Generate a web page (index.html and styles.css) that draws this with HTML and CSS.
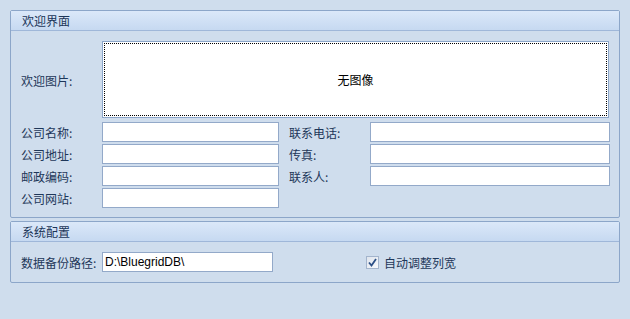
FILE: index.html
```html
<!DOCTYPE html>
<html lang="zh-CN">
<head>
    <meta charset="UTF-8">
    <title>系统设置</title>
    <link rel="stylesheet" href="styles.css">
</head>
<body>
    <div class="page">
        <div class="group">
            <div class="group-title">欢迎界面</div>
            <div class="group-body form-grid">
                <div class="label">欢迎图片:</div>
                <div class="picture">无图像</div>

                <div class="label">公司名称:</div>
                <input class="field" type="text">
                <div class="label label-right">联系电话:</div>
                <input class="field" type="text">

                <div class="label">公司地址:</div>
                <input class="field" type="text">
                <div class="label label-right">传真:</div>
                <input class="field" type="text">

                <div class="label">邮政编码:</div>
                <input class="field" type="text">
                <div class="label label-right">联系人:</div>
                <input class="field" type="text">

                <div class="label">公司网站:</div>
                <input class="field" type="text">
            </div>
        </div>

        <div class="group group-config">
            <div class="group-title">系统配置</div>
            <div class="group-body config-row">
                <div class="label">数据备份路径:</div>
                <input class="field path-field" type="text" value="D:\BluegridDB\">
                <label class="check">
                    <span class="check-box">
                        <svg width="9" height="9" viewBox="0 0 9 9">
                            <path d="M1 4.5 L3.5 7.5 L8 1" fill="none" stroke="#2b4f86" stroke-width="1.8"/>
                        </svg>
                    </span>
                    自动调整列宽
                </label>
            </div>
        </div>
    </div>
</body>
</html>
```

FILE: styles.css
```css
body {
    margin: 0;
    padding: 0;
    background-color: #cfdded;
    font-family: "Noto Sans CJK SC", "Liberation Sans", sans-serif;
    font-size: 12px;
    color: #1e3759;
}
.page {
    width: 630px;
    height: 319px;
    padding-top: 10px;
    box-sizing: border-box;
}
.group {
    width: 610px;
    margin-left: 10px;
    box-sizing: border-box;
    border: 1px solid #8ca6c9;
    border-radius: 2px;
}
.group-config {
    margin-top: 3px;
}
.group-title {
    height: 19px;
    line-height: 19px;
    padding-left: 11px;
    color: #1b3558;
    background: linear-gradient(to bottom, #dbe8f9, #c6d9f1);
    border-bottom: 1px solid #9fb7d9;
}
.group-body {
    padding: 10px 9px 9px 9px;
}

/* welcome form */
.form-grid {
    display: grid;
    grid-template-columns: 82px 177px 91px 240px;
    grid-template-rows: 79px;
    grid-auto-rows: 20px;
    row-gap: 2px;
}
.label {
    display: flex;
    align-items: center;
    padding-left: 1px;
    white-space: nowrap;
}
.label-right {
    padding-left: 10px;
}
.picture {
    grid-column: 2 / 5;
    height: 77px;
    margin-right: 1px;
    box-sizing: border-box;
    background-color: #fff;
    border: 1px solid #8ca6c9;
    outline: 1px dotted #000;
    outline-offset: -3px;
    color: #000;
    display: flex;
    align-items: center;
    justify-content: center;
}
.field {
    width: 100%;
    height: 20px;
    margin: 0;
    padding: 0 2px;
    box-sizing: border-box;
    border: 1px solid #93a9c9;
    background-color: #fff;
    font-family: "Liberation Sans", sans-serif;
    font-size: 12px;
    color: #000;
    outline: none;
}

/* config row */
.config-row {
    display: flex;
    align-items: center;
    padding-bottom: 10px;
}
.config-row .label {
    width: 82px;
    box-sizing: border-box;
}
.path-field {
    width: 171px;
}
.check {
    display: flex;
    align-items: center;
    margin-left: 93px;
}
.check-box {
    width: 11px;
    height: 11px;
    margin-right: 5px;
    border: 1px solid #a3b4cc;
    background: linear-gradient(to bottom right, #dfe5ee, #f6f8fb);
    display: flex;
    align-items: center;
    justify-content: center;
}
```
